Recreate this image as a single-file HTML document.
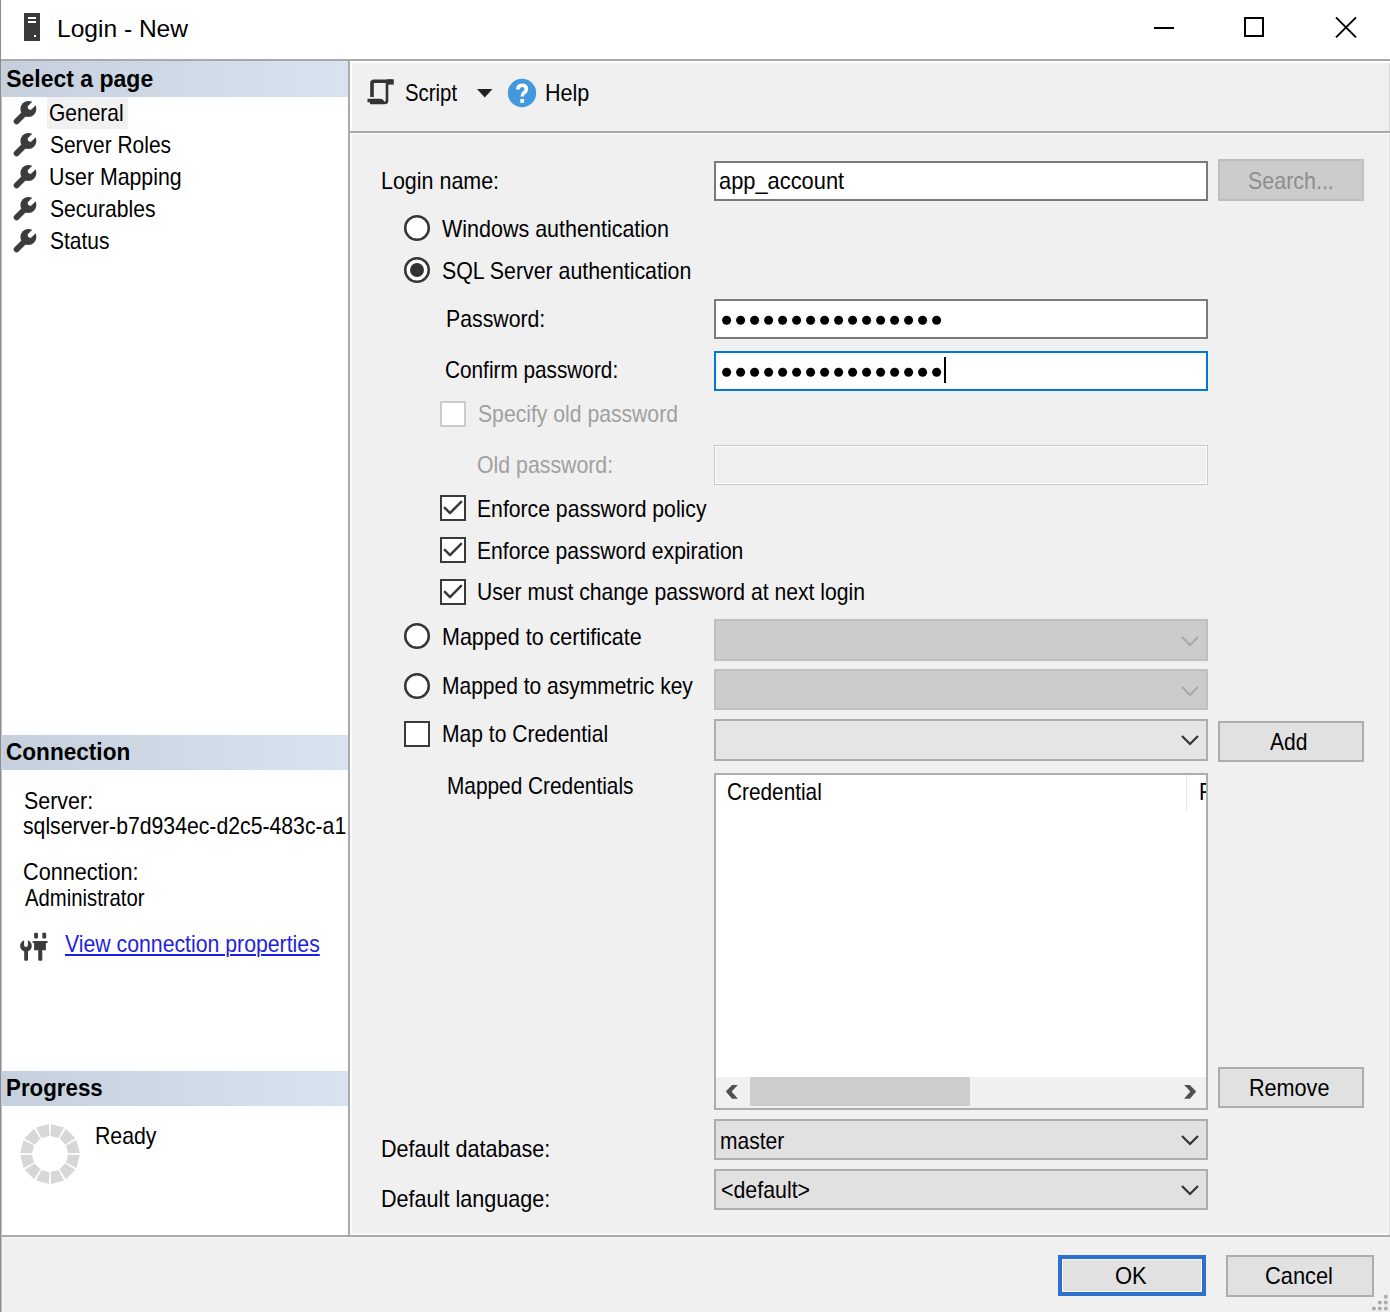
<!DOCTYPE html>
<html><head><meta charset="utf-8"><title>Login - New</title><style>
html,body{margin:0;padding:0}
body{width:1390px;height:1312px;position:relative;overflow:hidden;background:#f0f0f0;font-family:"Liberation Sans",sans-serif}
.a{position:absolute}
.t{position:absolute;white-space:pre;line-height:30px;font-size:24px;transform-origin:0 0;color:#000}
</style></head><body>
<div class="a" style="left:0px;top:0px;width:1390px;height:59px;background:#fff"></div>
<svg class="a" style="left:20px;top:9px" width="24" height="36" viewBox="0 0 24 36"><rect x="4" y="4" width="16" height="28" fill="#3a3a3a"/><rect x="8" y="8" width="8" height="2" fill="#fff"/><rect x="8" y="12" width="8" height="2" fill="#fff"/><rect x="14" y="26" width="2" height="2" fill="#fff"/></svg>
<div class="t" style="left:57.2px;top:14px;font-size:24px;font-weight:400;color:#000;transform:scaleX(1.0230);">Login - New</div>
<div class="a" style="left:1154px;top:27px;width:20px;height:2px;background:#000"></div>
<div class="a" style="left:1244px;top:17px;width:20px;height:20px;border:2px solid #000;box-sizing:border-box"></div>
<svg class="a" style="left:1330px;top:11px" width="32" height="33" viewBox="0 0 32 33"><path d="M6 6.3 L26 26.3 M26 6.3 L6 26.3" stroke="#000" stroke-width="1.9"/></svg>
<div class="a" style="left:0px;top:59px;width:1390px;height:2px;background:#a9a9a9"></div>
<div class="a" style="left:0px;top:0px;width:1px;height:1312px;background:#8c8c8c"></div>
<div class="a" style="left:1px;top:61px;width:1px;height:1251px;background:#c4c4c4"></div>
<div class="a" style="left:2px;top:61px;width:346px;height:1174px;background:#fff"></div>
<div class="a" style="left:348px;top:61px;width:2px;height:1174px;background:#aaaaaa"></div>
<div class="a" style="left:1px;top:61px;width:347px;height:36px;background:linear-gradient(to right,#c6d0dd,#d8e3ef)"></div>
<div class="t" style="left:6.2px;top:64px;font-size:23px;font-weight:700;color:#000;">Select a page</div>
<div class="a" style="left:47px;top:97px;width:81px;height:32px;background:#f1f1f1"></div>
<svg class="a" style="left:10px;top:98px" width="30" height="30" viewBox="0 0 30 30"><circle cx="18.4" cy="11" r="8" fill="#3c3c3c"/><path d="M20.2 9.3 L28 1.5" stroke="#fff" stroke-width="4.8" stroke-linecap="round"/><path d="M16.5 13.5 L6.6 23.4" stroke="#3c3c3c" stroke-width="5.8" stroke-linecap="round"/></svg>
<div class="t" style="left:48.8px;top:98px;font-size:24px;font-weight:400;color:#000;transform:scaleX(0.8747);">General</div>
<svg class="a" style="left:10px;top:130px" width="30" height="30" viewBox="0 0 30 30"><circle cx="18.4" cy="11" r="8" fill="#3c3c3c"/><path d="M20.2 9.3 L28 1.5" stroke="#fff" stroke-width="4.8" stroke-linecap="round"/><path d="M16.5 13.5 L6.6 23.4" stroke="#3c3c3c" stroke-width="5.8" stroke-linecap="round"/></svg>
<div class="t" style="left:50.1px;top:130px;font-size:24px;font-weight:400;color:#000;transform:scaleX(0.8723);">Server Roles</div>
<svg class="a" style="left:10px;top:162px" width="30" height="30" viewBox="0 0 30 30"><circle cx="18.4" cy="11" r="8" fill="#3c3c3c"/><path d="M20.2 9.3 L28 1.5" stroke="#fff" stroke-width="4.8" stroke-linecap="round"/><path d="M16.5 13.5 L6.6 23.4" stroke="#3c3c3c" stroke-width="5.8" stroke-linecap="round"/></svg>
<div class="t" style="left:49.2px;top:162px;font-size:24px;font-weight:400;color:#000;transform:scaleX(0.8877);">User Mapping</div>
<svg class="a" style="left:10px;top:194px" width="30" height="30" viewBox="0 0 30 30"><circle cx="18.4" cy="11" r="8" fill="#3c3c3c"/><path d="M20.2 9.3 L28 1.5" stroke="#fff" stroke-width="4.8" stroke-linecap="round"/><path d="M16.5 13.5 L6.6 23.4" stroke="#3c3c3c" stroke-width="5.8" stroke-linecap="round"/></svg>
<div class="t" style="left:50.1px;top:194px;font-size:24px;font-weight:400;color:#000;transform:scaleX(0.8788);">Securables</div>
<svg class="a" style="left:10px;top:226px" width="30" height="30" viewBox="0 0 30 30"><circle cx="18.4" cy="11" r="8" fill="#3c3c3c"/><path d="M20.2 9.3 L28 1.5" stroke="#fff" stroke-width="4.8" stroke-linecap="round"/><path d="M16.5 13.5 L6.6 23.4" stroke="#3c3c3c" stroke-width="5.8" stroke-linecap="round"/></svg>
<div class="t" style="left:50.1px;top:226px;font-size:24px;font-weight:400;color:#000;transform:scaleX(0.8727);">Status</div>
<div class="a" style="left:1px;top:735px;width:347px;height:35px;background:linear-gradient(to right,#c6d0dd,#d8e3ef)"></div>
<div class="t" style="left:6.1px;top:737px;font-size:23px;font-weight:700;color:#000;transform:scaleX(0.9823);">Connection</div>
<div class="t" style="left:23.7px;top:786px;font-size:24px;font-weight:400;color:#000;transform:scaleX(0.8932);">Server:</div>
<div class="t" style="left:23.1px;top:811px;font-size:24px;font-weight:400;color:#000;transform:scaleX(0.8841);">sqlserver-b7d934ec-d2c5-483c-a1</div>
<div class="t" style="left:23.1px;top:857px;font-size:24px;font-weight:400;color:#000;transform:scaleX(0.9016);">Connection:</div>
<div class="t" style="left:24.6px;top:883px;font-size:24px;font-weight:400;color:#000;transform:scaleX(0.8454);">Administrator</div>
<svg class="a" style="left:16px;top:928px" width="36" height="36" viewBox="0 0 36 36" fill="#3c3c3c"><circle cx="9.95" cy="17.9" r="5.9"/><rect x="8.2" y="21" width="3.8" height="11.7" rx="1"/><path d="M8.1 10 L8.1 17 A1.9 1.9 0 0 0 11.9 17 L11.9 10 Z" fill="#fff"/><rect x="18.1" y="4.7" width="3.9" height="5.8" rx="1"/><rect x="26.3" y="4.7" width="3.9" height="5.8" rx="1"/><rect x="16.5" y="12.9" width="15.3" height="2.2" rx="1"/><rect x="18.1" y="14.5" width="11.8" height="7.8"/><rect x="22.2" y="22" width="4.1" height="10.7" rx="1"/></svg>
<div class="t" style="left:65.0px;top:929px;font-size:24px;font-weight:400;color:#1f1fe0;transform:scaleX(0.8854);text-decoration:underline;text-decoration-thickness:2px;text-underline-offset:2px;">View connection properties</div>
<div class="a" style="left:1px;top:1071px;width:347px;height:35px;background:linear-gradient(to right,#c6d0dd,#d8e3ef)"></div>
<div class="t" style="left:6.1px;top:1073px;font-size:23px;font-weight:700;color:#000;transform:scaleX(0.9701);">Progress</div>
<svg class="a" style="left:18px;top:1122px" width="64" height="64" viewBox="0 0 64 64"><path d="M33.04 2.12 L46.04 5.60 L40.50 16.02 L32.63 13.91Z M47.84 6.64 L57.36 16.16 L47.35 22.41 L41.59 16.65Z M58.40 17.96 L61.88 30.96 L50.09 31.37 L47.98 23.50Z M61.88 33.04 L58.40 46.04 L47.98 40.50 L50.09 32.63Z M57.36 47.84 L47.84 57.36 L41.59 47.35 L47.35 41.59Z M46.04 58.40 L33.04 61.88 L32.63 50.09 L40.50 47.98Z M30.96 61.88 L17.96 58.40 L23.50 47.98 L31.37 50.09Z M16.16 57.36 L6.64 47.84 L16.65 41.59 L22.41 47.35Z M5.60 46.04 L2.12 33.04 L13.91 32.63 L16.02 40.50Z M2.12 30.96 L5.60 17.96 L16.02 23.50 L13.91 31.37Z M6.64 16.16 L16.16 6.64 L22.41 16.65 L16.65 22.41Z M17.96 5.60 L30.96 2.12 L31.37 13.91 L23.50 16.02Z" fill="#d7d7d7"/></svg>
<div class="t" style="left:95.2px;top:1121px;font-size:24px;font-weight:400;color:#000;transform:scaleX(0.8866);">Ready</div>
<div class="a" style="left:2px;top:1235px;width:1388px;height:2px;background:#aaaaaa"></div>
<div class="a" style="left:2px;top:1237px;width:1388px;height:1px;background:#f6f6f6"></div>
<div class="a" style="left:350px;top:61px;width:1040px;height:1174px;background:#f0f0f0"></div>
<div class="a" style="left:350px;top:1233px;width:1040px;height:2px;background:#fafafa"></div>
<div class="a" style="left:350px;top:134px;width:2px;height:1101px;background:#fafafa"></div>
<div class="a" style="left:1388px;top:134px;width:1px;height:1101px;background:#f7f7f7"></div>
<div class="a" style="left:1389px;top:61px;width:1px;height:1174px;background:#dadada"></div>
<div class="a" style="left:350px;top:61px;width:1040px;height:2px;background:#fff"></div>
<div class="a" style="left:350px;top:61px;width:2px;height:70px;background:#fff"></div>
<div class="a" style="left:350px;top:131px;width:1040px;height:2px;background:#a8a8a8"></div>
<div class="a" style="left:350px;top:133px;width:1040px;height:1px;background:#fff"></div>
<svg class="a" style="left:362px;top:75px" width="36" height="36" viewBox="0 0 36 36" fill="none" stroke="#333"><path d="M10 22 L10 8 Q10 6.3 12 6.3 L30 6.3" stroke-width="3.6"/><path d="M25 7 L25 26 Q25 28 22 28 L8 28" stroke-width="2.6"/><rect x="25" y="4.3" width="6.8" height="5.3" fill="#333" stroke="none"/><path d="M5.5 25.5 L18 25.5 Q20 25.5 21 27.5" stroke-width="3.5"/></svg>
<div class="t" style="left:404.5px;top:78px;font-size:24px;font-weight:400;color:#000;transform:scaleX(0.8483);">Script</div>
<svg class="a" style="left:476px;top:88px" width="18" height="11" viewBox="0 0 18 11"><path d="M1 1 L16.5 1 L8.75 9.5Z" fill="#222"/></svg>
<svg class="a" style="left:506px;top:77px" width="32" height="32" viewBox="0 0 32 32"><circle cx="16" cy="16" r="14.2" fill="#4299dd"/><path d="M11.9 12.6 Q11.9 8.3 16.1 8.3 Q20.3 8.3 20.3 12 Q20.3 14.3 18 15.7 Q16.3 16.7 16.3 19.4" fill="none" stroke="#fff" stroke-width="3.6"/><rect x="14.3" y="22" width="3.8" height="3.8" fill="#fff"/></svg>
<div class="t" style="left:545.3px;top:78px;font-size:24px;font-weight:400;color:#000;transform:scaleX(0.8978);">Help</div>
<div class="t" style="left:380.6px;top:166px;font-size:24px;font-weight:400;color:#000;transform:scaleX(0.8938);">Login name:</div>
<div class="a" style="left:714px;top:161px;width:494px;height:40px;background:#fff;border:2px solid #7a7a7a;box-sizing:border-box"></div>
<div class="t" style="left:719.2px;top:166px;font-size:24px;font-weight:400;color:#000;transform:scaleX(0.9103);">app_account</div>
<div class="a" style="left:1218px;top:159px;width:146px;height:42px;background:#cccccc;border:2px solid #bfbfbf;box-sizing:border-box"></div>
<div class="t" style="left:1247.8px;top:166px;font-size:24px;font-weight:400;color:#8d8d8d;transform:scaleX(0.8935);">Search...</div>
<svg class="a" style="left:401px;top:212px" width="32" height="32" viewBox="0 0 32 32"><circle cx="16" cy="16" r="11.8" fill="#fff" stroke="#363636" stroke-width="2.5"/></svg>
<div class="t" style="left:442.3px;top:214px;font-size:24px;font-weight:400;color:#000;transform:scaleX(0.8956);">Windows authentication</div>
<svg class="a" style="left:401px;top:254px" width="32" height="32" viewBox="0 0 32 32"><circle cx="16" cy="16" r="11.8" fill="#fff" stroke="#363636" stroke-width="2.5"/><circle cx="16" cy="16" r="7" fill="#333"/></svg>
<div class="t" style="left:442.1px;top:256px;font-size:24px;font-weight:400;color:#000;transform:scaleX(0.8885);">SQL Server authentication</div>
<div class="t" style="left:445.5px;top:304px;font-size:24px;font-weight:400;color:#000;transform:scaleX(0.8861);">Password:</div>
<div class="a" style="left:714px;top:299px;width:494px;height:40px;background:#fff;border:2px solid #7a7a7a;box-sizing:border-box"></div>
<div class="t" style="left:444.9px;top:355px;font-size:24px;font-weight:400;color:#000;transform:scaleX(0.8655);">Confirm password:</div>
<div class="a" style="left:714px;top:351px;width:494px;height:40px;background:#fff;border:2px solid #0078d7;box-sizing:border-box"></div>
<svg class="a" style="left:714px;top:0px;overflow:visible" width="240" height="1"><g fill="#000"><circle cx="12.6" cy="320.3" r="4.5"/><circle cx="26.6" cy="320.3" r="4.5"/><circle cx="40.6" cy="320.3" r="4.5"/><circle cx="54.6" cy="320.3" r="4.5"/><circle cx="68.6" cy="320.3" r="4.5"/><circle cx="82.6" cy="320.3" r="4.5"/><circle cx="96.6" cy="320.3" r="4.5"/><circle cx="110.6" cy="320.3" r="4.5"/><circle cx="124.6" cy="320.3" r="4.5"/><circle cx="138.6" cy="320.3" r="4.5"/><circle cx="152.6" cy="320.3" r="4.5"/><circle cx="166.6" cy="320.3" r="4.5"/><circle cx="180.6" cy="320.3" r="4.5"/><circle cx="194.6" cy="320.3" r="4.5"/><circle cx="208.6" cy="320.3" r="4.5"/><circle cx="222.6" cy="320.3" r="4.5"/></g></svg>
<svg class="a" style="left:714px;top:0px;overflow:visible" width="240" height="1"><g fill="#000"><circle cx="12.6" cy="372.3" r="4.5"/><circle cx="26.6" cy="372.3" r="4.5"/><circle cx="40.6" cy="372.3" r="4.5"/><circle cx="54.6" cy="372.3" r="4.5"/><circle cx="68.6" cy="372.3" r="4.5"/><circle cx="82.6" cy="372.3" r="4.5"/><circle cx="96.6" cy="372.3" r="4.5"/><circle cx="110.6" cy="372.3" r="4.5"/><circle cx="124.6" cy="372.3" r="4.5"/><circle cx="138.6" cy="372.3" r="4.5"/><circle cx="152.6" cy="372.3" r="4.5"/><circle cx="166.6" cy="372.3" r="4.5"/><circle cx="180.6" cy="372.3" r="4.5"/><circle cx="194.6" cy="372.3" r="4.5"/><circle cx="208.6" cy="372.3" r="4.5"/><circle cx="222.6" cy="372.3" r="4.5"/></g></svg>
<div class="a" style="left:944px;top:357px;width:2px;height:26px;background:#000"></div>
<svg class="a" style="left:440px;top:401px" width="26" height="26" viewBox="0 0 26 26"><rect x="1" y="1" width="24" height="24" fill="#fff" stroke="#cccccc" stroke-width="2"/></svg>
<div class="t" style="left:478.0px;top:399px;font-size:24px;font-weight:400;color:#a0a0a0;transform:scaleX(0.8817);">Specify old password</div>
<div class="t" style="left:476.6px;top:450px;font-size:24px;font-weight:400;color:#a0a0a0;transform:scaleX(0.8873);">Old password:</div>
<div class="a" style="left:714px;top:445px;width:494px;height:40px;background:#f0f0f0;border:1px solid #c8c8c8;box-shadow:inset 0 0 0 1px #fff;box-sizing:border-box"></div>
<svg class="a" style="left:440px;top:495px" width="26" height="26" viewBox="0 0 26 26"><rect x="1" y="1" width="24" height="24" fill="#fff" stroke="#3a3a3a" stroke-width="2"/><path d="M4.8 12.9 L10 18.1 L21.1 6.9" fill="none" stroke="#3a3a3a" stroke-width="2.5" stroke-linecap="round" stroke-linejoin="round"/></svg>
<div class="t" style="left:477.2px;top:494px;font-size:24px;font-weight:400;color:#000;transform:scaleX(0.8822);">Enforce password policy</div>
<svg class="a" style="left:440px;top:537px" width="26" height="26" viewBox="0 0 26 26"><rect x="1" y="1" width="24" height="24" fill="#fff" stroke="#3a3a3a" stroke-width="2"/><path d="M4.8 12.9 L10 18.1 L21.1 6.9" fill="none" stroke="#3a3a3a" stroke-width="2.5" stroke-linecap="round" stroke-linejoin="round"/></svg>
<div class="t" style="left:477.2px;top:536px;font-size:24px;font-weight:400;color:#000;transform:scaleX(0.8796);">Enforce password expiration</div>
<svg class="a" style="left:440px;top:579px" width="26" height="26" viewBox="0 0 26 26"><rect x="1" y="1" width="24" height="24" fill="#fff" stroke="#3a3a3a" stroke-width="2"/><path d="M4.8 12.9 L10 18.1 L21.1 6.9" fill="none" stroke="#3a3a3a" stroke-width="2.5" stroke-linecap="round" stroke-linejoin="round"/></svg>
<div class="t" style="left:477.2px;top:577px;font-size:24px;font-weight:400;color:#000;transform:scaleX(0.8812);">User must change password at next login</div>
<svg class="a" style="left:401px;top:620px" width="32" height="32" viewBox="0 0 32 32"><circle cx="16" cy="16" r="11.8" fill="#fff" stroke="#363636" stroke-width="2.5"/></svg>
<div class="t" style="left:441.6px;top:622px;font-size:24px;font-weight:400;color:#000;transform:scaleX(0.8959);">Mapped to certificate</div>
<svg class="a" style="left:401px;top:670px" width="32" height="32" viewBox="0 0 32 32"><circle cx="16" cy="16" r="11.8" fill="#fff" stroke="#363636" stroke-width="2.5"/></svg>
<div class="t" style="left:441.7px;top:671px;font-size:24px;font-weight:400;color:#000;transform:scaleX(0.8747);">Mapped to asymmetric key</div>
<svg class="a" style="left:404px;top:721px" width="26" height="26" viewBox="0 0 26 26"><rect x="1" y="1" width="24" height="24" fill="#fff" stroke="#3a3a3a" stroke-width="2"/></svg>
<div class="t" style="left:441.6px;top:719px;font-size:24px;font-weight:400;color:#000;transform:scaleX(0.8769);">Map to Credential</div>
<div class="t" style="left:446.5px;top:771px;font-size:24px;font-weight:400;color:#000;transform:scaleX(0.8679);">Mapped Credentials</div>
<div class="a" style="left:714px;top:619px;width:494px;height:42px;background:#cccccc;border:2px solid #bfbfbf;box-sizing:border-box"></div>
<svg class="a" style="left:1180px;top:635px" width="20" height="12" viewBox="0 0 20 12"><path d="M2 2 L10 10 L18 2" fill="none" stroke="#a9a9a9" stroke-width="2.2"/></svg>
<div class="a" style="left:714px;top:669px;width:494px;height:41px;background:#cccccc;border:2px solid #bfbfbf;box-sizing:border-box"></div>
<svg class="a" style="left:1180px;top:685px" width="20" height="12" viewBox="0 0 20 12"><path d="M2 2 L10 10 L18 2" fill="none" stroke="#a9a9a9" stroke-width="2.2"/></svg>
<div class="a" style="left:714px;top:719px;width:494px;height:42px;background:#e5e5e5;border:2px solid #adadad;box-sizing:border-box"></div>
<svg class="a" style="left:1180px;top:734px" width="20" height="12" viewBox="0 0 20 12"><path d="M2 2 L10 10 L18 2" fill="none" stroke="#333" stroke-width="2.2"/></svg>
<div class="a" style="left:1218px;top:721px;width:146px;height:41px;background:#e1e1e1;border:2px solid #adadad;box-sizing:border-box"></div>
<div class="t" style="left:1270.4px;top:727px;font-size:24px;font-weight:400;color:#000;transform:scaleX(0.8780);">Add</div>
<div class="a" style="left:714px;top:773px;width:494px;height:337px;background:#fff;border:2px solid #adadad;box-sizing:border-box"></div>
<div class="t" style="left:726.7px;top:777px;font-size:24px;font-weight:400;color:#000;transform:scaleX(0.8664);">Credential</div>
<div class="a" style="left:1186px;top:775px;width:1px;height:35px;background:#e5e5e5"></div>
<div class="a" style="left:1187px;top:775px;width:19px;height:40px;overflow:hidden">
<div class="t" style="left:11.5px;top:2px;transform:scaleX(0.88)">F</div></div>
<div class="a" style="left:716px;top:1077px;width:490px;height:31px;background:#f0f0f0"></div>
<div class="a" style="left:750px;top:1077px;width:220px;height:29px;background:#cdcdcd"></div>
<svg class="a" style="left:716px;top:1074px" width="30" height="36" viewBox="0 0 30 36"><path d="M9.8 17.6 L16.1 10.9 L21.9 10.9 L15.6 17.6 L21.9 24.7 L16.1 24.7 Z" fill="#505050"/></svg>
<svg class="a" style="left:1176px;top:1074px" width="30" height="36" viewBox="0 0 30 36"><path d="M20.2 17.6 L13.9 10.9 L8.1 10.9 L14.4 17.6 L8.1 24.7 L13.9 24.7 Z" fill="#505050"/></svg>
<div class="a" style="left:1218px;top:1067px;width:146px;height:41px;background:#e1e1e1;border:2px solid #adadad;box-sizing:border-box"></div>
<div class="t" style="left:1248.8px;top:1073px;font-size:24px;font-weight:400;color:#000;transform:scaleX(0.9000);">Remove</div>
<div class="t" style="left:381.4px;top:1134px;font-size:24px;font-weight:400;color:#000;transform:scaleX(0.8995);">Default database:</div>
<div class="t" style="left:381.4px;top:1184px;font-size:24px;font-weight:400;color:#000;transform:scaleX(0.8995);">Default language:</div>
<div class="a" style="left:714px;top:1119px;width:494px;height:41px;background:#e1e1e1;border:2px solid #adadad;box-sizing:border-box"></div>
<div class="t" style="left:719.6px;top:1126px;font-size:24px;font-weight:400;color:#000;transform:scaleX(0.8761);">master</div>
<svg class="a" style="left:1180px;top:1134px" width="20" height="12" viewBox="0 0 20 12"><path d="M2 2 L10 10 L18 2" fill="none" stroke="#333" stroke-width="2.2"/></svg>
<div class="a" style="left:714px;top:1169px;width:494px;height:41px;background:#e1e1e1;border:2px solid #adadad;box-sizing:border-box"></div>
<div class="t" style="left:721.4px;top:1175px;font-size:24px;font-weight:400;color:#000;transform:scaleX(0.8898);">&lt;default&gt;</div>
<svg class="a" style="left:1180px;top:1184px" width="20" height="12" viewBox="0 0 20 12"><path d="M2 2 L10 10 L18 2" fill="none" stroke="#333" stroke-width="2.2"/></svg>
<div class="a" style="left:2px;top:1238px;width:1388px;height:74px;background:#f0f0f0"></div>
<div class="a" style="left:1058px;top:1255px;width:148px;height:41px;background:#e1e1e1;border:4px solid #2f70cc;box-shadow:inset 0 0 0 1px #f8f8f8;box-sizing:border-box"></div>
<div class="t" style="left:1114.7px;top:1261px;font-size:24px;font-weight:400;color:#000;transform:scaleX(0.9152);">OK</div>
<div class="a" style="left:1226px;top:1255px;width:148px;height:42px;background:#e1e1e1;border:2px solid #adadad;box-sizing:border-box"></div>
<div class="t" style="left:1264.5px;top:1261px;font-size:24px;font-weight:400;color:#000;transform:scaleX(0.9097);">Cancel</div>
<svg class="a" style="left:0px;top:0px;overflow:visible" width="1" height="1" fill="#ababab"><circle cx="1385.8" cy="1296.7" r="2"/><circle cx="1385.8" cy="1302.4" r="2"/><circle cx="1379.8" cy="1302.4" r="2"/><circle cx="1385.8" cy="1308.5" r="2"/><circle cx="1379.8" cy="1308.5" r="2"/><circle cx="1373.9" cy="1308.5" r="2"/></svg>
</body></html>
